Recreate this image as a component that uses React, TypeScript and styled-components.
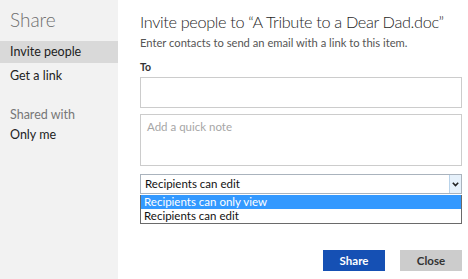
import styled, { createGlobalStyle } from 'styled-components';

const Global = createGlobalStyle`
  html, body {
    margin: 0;
    padding: 0;
    background: #ffffff;
  }
  body {
    font-family: "Lato", "Open Sans", sans-serif;
    color: #222222;
  }
`;

const Page = styled.div`
  display: flex;
  width: 468px;
  height: 279px;
  overflow: hidden;
`;

const Sidebar = styled.nav`
  width: 118px;
  flex-shrink: 0;
  background: #f2f2f2;
  display: flex;
  flex-direction: column;
  padding-top: 8px;
`;

const SideTitle = styled.div`
  font-size: 19px;
  font-weight: 300;
  color: #6e6e6e;
  padding-left: 10px;
  line-height: 24px;
  margin-bottom: 9px;
`;

const NavItem = styled.div<{ $active?: boolean }>`
  height: 22px;
  line-height: 22px;
  padding-left: 10px;
  font-size: 12.5px;
  color: #222222;
  background: ${(p) => (p.$active ? '#d9d9d9' : 'transparent')};
  & + & {
    margin-top: 2px;
  }
`;

const SideLabel = styled.div`
  margin-top: 19px;
  height: 18px;
  line-height: 18px;
  padding-left: 10px;
  font-size: 12.5px;
  color: #777777;
`;

const Main = styled.main`
  flex: 1;
  min-width: 0;
  display: flex;
  flex-direction: column;
  padding: 9px 6px 0 22px;
`;

const Title = styled.h1`
  margin: 0;
  font-size: 16.3px;
  font-weight: 300;
  letter-spacing: -0.35px;
  line-height: 26px;
  color: #1e1e1e;
  white-space: nowrap;
`;

const Subtitle = styled.p`
  margin: 0;
  font-size: 11.2px;
  line-height: 16px;
  color: #555555;
`;

const Label = styled.div`
  margin-top: 9px;
  font-size: 10.5px;
  font-weight: 700;
  line-height: 14px;
  color: #333333;
`;

const Box = styled.div<{ $h: number }>`
  margin-top: ${(p) => (p.$h > 40 ? 6 : 3)}px;
  height: ${(p) => p.$h}px;
  border: 1px solid #cccccc;
  box-sizing: border-box;
  padding: 5px 6px;
  font-size: 11.5px;
  color: #a6a6a6;
`;

const Select = styled.div`
  margin-top: 8px;
  height: 20px;
  border: 1px solid #aab3bd;
  box-sizing: border-box;
  display: flex;
  align-items: stretch;
  font-size: 11.5px;
  color: #111111;
`;

const SelectValue = styled.div`
  flex: 1;
  padding-left: 4px;
  line-height: 18px;
`;

const Arrow = styled.div`
  width: 11px;
  border-left: 1px solid #b9d3ea;
  background: #e6f1fb;
  display: flex;
  align-items: center;
  justify-content: center;
`;

const List = styled.ul`
  margin: 1px 0 0;
  padding: 0;
  list-style: none;
  border: 1px solid #6a6a6a;
  border-top: none;
  font-size: 11.5px;
`;

const Option = styled.li<{ $selected?: boolean }>`
  height: 14px;
  line-height: 14px;
  padding-left: 3px;
  background: ${(p) => (p.$selected ? '#3399ff' : '#ffffff')};
  color: ${(p) => (p.$selected ? '#ffffff' : '#111111')};
`;

const Actions = styled.div`
  margin-top: 26px;
  display: flex;
  justify-content: flex-end;
  gap: 15px;
`;

const Button = styled.button<{ $primary?: boolean }>`
  width: 62px;
  height: 21px;
  border: none;
  padding: 0;
  font-family: inherit;
  font-size: 11.5px;
  font-weight: 700;
  background: ${(p) => (p.$primary ? '#1550b4' : '#cccccc')};
  color: ${(p) => (p.$primary ? '#ffffff' : '#333333')};
`;

export default function App() {
  return (
    <Page>
      <Global />
      <Sidebar>
        <SideTitle>Share</SideTitle>
        <NavItem $active>Invite people</NavItem>
        <NavItem>Get a link</NavItem>
        <SideLabel>Shared with</SideLabel>
        <NavItem>Only me</NavItem>
      </Sidebar>
      <Main>
        <Title>Invite people to “A Tribute to a Dear Dad.doc”</Title>
        <Subtitle>Enter contacts to send an email with a link to this item.</Subtitle>
        <Label>To</Label>
        <Box $h={31} />
        <Box $h={52}>Add a quick note</Box>
        <Select>
          <SelectValue>Recipients can edit</SelectValue>
          <Arrow>
            <svg width="7" height="5" viewBox="0 0 7 5">
              <path d="M0.8 0.8 L3.5 3.6 L6.2 0.8" fill="none" stroke="#222" strokeWidth="1.6" />
            </svg>
          </Arrow>
        </Select>
        <List>
          <Option $selected>Recipients can only view</Option>
          <Option>Recipients can edit</Option>
        </List>
        <Actions>
          <Button $primary>Share</Button>
          <Button>Close</Button>
        </Actions>
      </Main>
    </Page>
  );
}
